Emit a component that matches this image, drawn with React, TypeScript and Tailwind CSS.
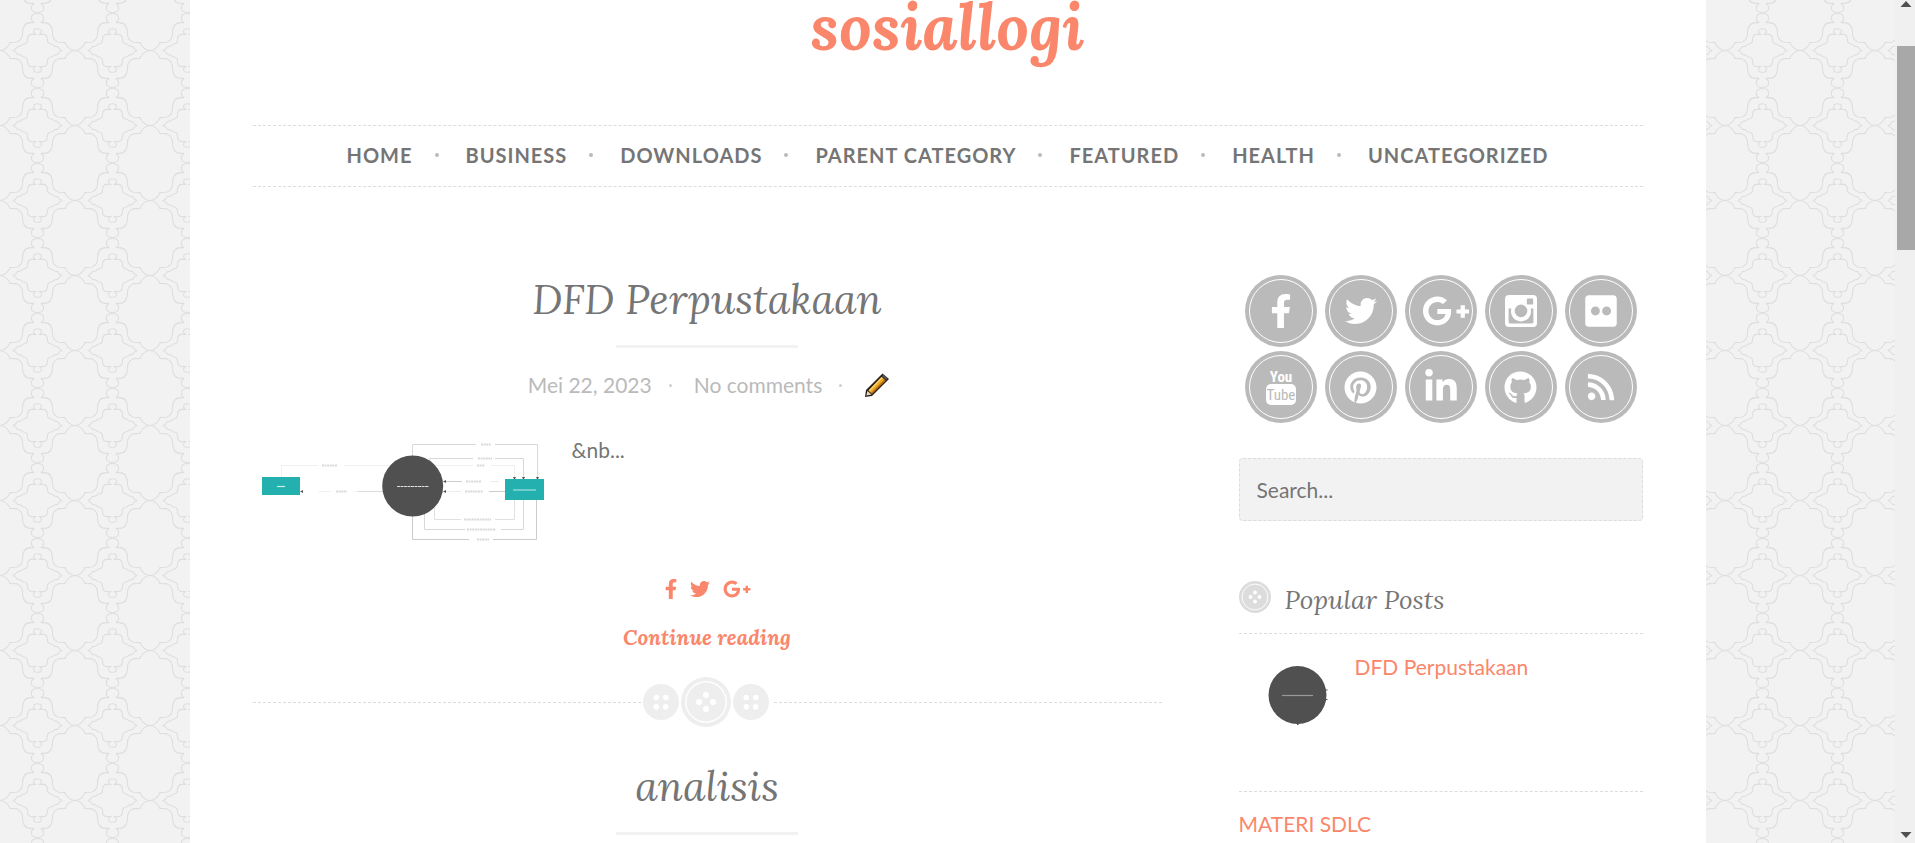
import type { ReactNode } from "react";
import {
  FaFacebookF,
  FaFlickr,
  FaGithub,
  FaGooglePlusG,
  FaLinkedinIn,
  FaPinterest,
  FaRss,
  FaTwitter,
} from "react-icons/fa";

const NAV = ["Home", "Business", "Downloads", "Parent Category", "Featured", "Health", "Uncategorized"];

function Wallpaper() {
  return (
    <svg className="absolute inset-0 h-full w-full" aria-hidden="true">
      <defs>
        <g id="quarter" fill="none" stroke="#dedede" strokeWidth="1.1">
          <path d="M0 37.5C4 37.3 8 33.5 9.8 30.5V29.6C14 29.6 16.5 29.5 18 28.6C21 27 22.5 24 22.5 20.5C22.5 14 24.5 9.6 31 9.6H34.2C32 8.5 31.2 6.5 31.4 4.5C31.8 1.5 34 .5 37.5 .5" />
          <path d="M12.8 37.5C15 37 16.5 35.5 17.5 33.6C20.5 33.6 22 32.5 23 31.2C26 31 27.6 29.5 27.6 26.5C27.6 23.5 28.5 21.4 32 21.4H35.4C34 20.5 33.4 19.5 33.5 18.3C33.7 16.3 35 15.7 37.5 15.7" />
        </g>
        <pattern id="lattice" width="75" height="75" y="13" patternUnits="userSpaceOnUse">
          <use href="#quarter" />
          <use href="#quarter" transform="translate(75 0) scale(-1 1)" />
          <use href="#quarter" transform="translate(0 75) scale(1 -1)" />
          <use href="#quarter" transform="translate(75 75) scale(-1 -1)" />
        </pattern>
      </defs>
      <rect width="100%" height="100%" fill="url(#lattice)" />
    </svg>
  );
}

function InstagramIcon() {
  return (
    <svg width="32" height="32" viewBox="0 0 32 32" aria-hidden="true">
      <path
        fill="currentColor"
        fillRule="evenodd"
        d="M4 0H28a4 4 0 0 1 4 4V28a4 4 0 0 1-4 4H4a4 4 0 0 1-4-4V4a4 4 0 0 1 4-4ZM23 3.6a1.2 1.2 0 0 0-1.2 1.2V8.4a1.2 1.2 0 0 0 1.2 1.2H27a1.2 1.2 0 0 0 1.2-1.2V4.8A1.2 1.2 0 0 0 27 3.6ZM3.6 13.6V27a1.4 1.4 0 0 0 1.4 1.4H27a1.4 1.4 0 0 0 1.4-1.4V13.6H25.6A10 10 0 1 1 6.4 13.6ZM16 9.6a6.3 6.3 0 1 0 0 12.6a6.3 6.3 0 1 0 0-12.6Z"
      />
    </svg>
  );
}

function YoutubeIcon() {
  return (
    <svg
      width="32"
      height="38"
      viewBox="0 0 32 38"
      aria-hidden="true"
      className="font-['Roboto_Condensed','Open_Sans_Condensed','Liberation_Sans_Narrow','Liberation_Sans',sans-serif]"
    >
      <text x="16" y="14" textAnchor="middle" fontSize="15" fontWeight="700" fill="currentColor">
        You
      </text>
      <rect x="1" y="16" width="30" height="21" rx="5" fill="currentColor" />
      <text x="16" y="32" textAnchor="middle" fontSize="15" fill="#bababa">
        Tube
      </text>
    </svg>
  );
}

const SOCIAL: { label: string; icon: ReactNode }[] = [
  { label: "Facebook", icon: <FaFacebookF size={34} /> },
  { label: "Twitter", icon: <FaTwitter size={32} /> },
  { label: "Google Plus", icon: <FaGooglePlusG size={48} className="ml-[10px] shrink-0" /> },
  { label: "Instagram", icon: <InstagramIcon /> },
  { label: "Flickr", icon: <FaFlickr size={36} /> },
  { label: "YouTube", icon: <YoutubeIcon /> },
  { label: "Pinterest", icon: <FaPinterest size={33} /> },
  { label: "LinkedIn", icon: <FaLinkedinIn size={36} /> },
  { label: "GitHub", icon: <FaGithub size={33} /> },
  { label: "RSS", icon: <FaRss size={30} /> },
];

function BigButton({ size, color }: { size: number; color: string }) {
  return (
    <svg width={size} height={size} viewBox="0 0 50 50" aria-hidden="true" className="shrink-0">
      <circle cx="25" cy="25" r="25" fill={color} />
      <circle cx="25" cy="25" r="20.2" fill="none" stroke="#fff" strokeWidth="1.4" />
      <g fill="#fff">
        <circle cx="25" cy="18" r="3" />
        <circle cx="25" cy="32" r="3" />
        <circle cx="18" cy="25" r="3" />
        <circle cx="32" cy="25" r="3" />
      </g>
    </svg>
  );
}

function SmallButton() {
  return (
    <svg width="36" height="36" viewBox="0 0 36 36" aria-hidden="true">
      <circle cx="18" cy="18" r="18" fill="#eee" />
      <g fill="#fff">
        <circle cx="13.3" cy="13.5" r="2.8" />
        <circle cx="22.7" cy="13.5" r="2.8" />
        <circle cx="13.3" cy="22.7" r="2.8" />
        <circle cx="22.7" cy="22.7" r="2.8" />
      </g>
    </svg>
  );
}

function Pencil() {
  return (
    <svg width="26" height="26" viewBox="0 0 26 26" aria-hidden="true">
      <path d="M1 25L2 18L18.5 1.5L25 7L8 24Z" fill="#2b2118" />
      <path d="M4.5 18.5L17.5 5L21.5 8.5L8 21.8Z" fill="#f0a61e" />
      <path d="M4.5 18.5L17.5 5L18.8 6.1L5.8 19.6Z" fill="#f8cf6c" />
      <path d="M7 21L20.4 7.5L21.5 8.5L8 21.8Z" fill="#b56f12" />
      <path d="M2.4 23.5L3.4 19L7.5 22.6Z" fill="#ead9c4" />
      <path d="M18 4.3L19.5 2.8L23.6 6.6L22 8Z" fill="#555" />
    </svg>
  );
}

function Diagram() {
  return (
    <svg width="300" height="120" viewBox="0 0 300 120" role="img" aria-label="DFD Perpustakaan">
      <g fill="none" stroke="#d8d8d8" strokeWidth="1">
        <path d="M159.500 30V14.500H284.500V50" />
        <path d="M176.500 32V28.500H270.500V50" />
        <path d="M28.500 47V35.500H137" stroke="#f0f0f0" />
        <path d="M180 35.500H261.500V50" stroke="#efefef" />
        <path d="M65 61.500H105" stroke="#f2f2f2" />
        <path d="M105 61.500H130" stroke="#dcdcdc" />
        <path d="M193 51.500H213M230 61.500H252" stroke="#ccc" />
        <path d="M213 51.500H246M193 61.500H230" stroke="#ececec" />
        <path d="M159.500 85V109.500H283.500V68" stroke="#ccc" />
        <path d="M171.500 84V99.500H270.500V68" />
        <path d="M181.500 78V89.500H261.500V68" stroke="#e0e0e0" />
      </g>
      <g fill="#fff">
        <rect x="223" y="11" width="19" height="7" />
        <rect x="220" y="25" width="22" height="7" />
        <rect x="65" y="32" width="26" height="7" />
        <rect x="220" y="32" width="18" height="7" />
        <rect x="78" y="58" width="24" height="7" />
        <rect x="209" y="48" width="28" height="7" />
        <rect x="208" y="58" width="28" height="7" />
        <rect x="208" y="86" width="34" height="7" />
        <rect x="212" y="96" width="36" height="7" />
        <rect x="216" y="106" width="24" height="7" />
      </g>
      <g stroke="#dadada" strokeWidth="2" strokeDasharray="2 .6">
        <path d="M228 14.500H238M225 28.500H239M69 35.500H84M224 35.500H232M83 61.500H94M213 51.500H228M212 61.500H230M211 89.500H238M214 99.500H243M224 109.500H236" />
      </g>
      <g fill="#555">
        <path d="M283 47h3l-1.500 3zM269 47h3l-1.500 3zM260 47h3l-1.500 3zM50 60v3l-3-1.500zM193 50v3l-3-1.500zM193 60v3l-3-1.500z" />
      </g>
      <circle cx="159.700" cy="56" r="30.500" fill="#505050" />
      <path d="M144 56.500H176" stroke="#ddd" strokeWidth="1.200" strokeDasharray="3 .5" />
      <rect x="9" y="47" width="38" height="18" fill="#24b0ae" />
      <path d="M24 56.500H32" stroke="#c6efee" strokeWidth="1.200" />
      <rect x="252" y="49" width="39" height="21" fill="#24b0ae" />
      <path d="M260 60H283" stroke="#a6e2e1" strokeWidth="1.200" />
    </svg>
  );
}

function Thumb() {
  return (
    <svg width="90" height="90" viewBox="0 0 90 90" role="img" aria-label="DFD Perpustakaan">
      <circle cx="44.500" cy="35" r="29" fill="#505050" />
      <path d="M29 35.500H60" stroke="#999" strokeWidth="1.200" />
      <path d="M44 63h1.500v2h-1.500zM73 29.500h1.500v1H73zM73 39h1.500v1H73z" fill="#505050" />
    </svg>
  );
}

function PostTitle({ children }: { children: ReactNode }) {
  return (
    <>
      <h2 className="font-['Lora','Liberation_Serif',serif] text-[41px] leading-[60px] italic">
        <a href="#post">{children}</a>
      </h2>
      <div className="mt-4 h-[3px] w-1/5 bg-[#f2f2f2]" />
    </>
  );
}

function NavDot() {
  return <span className="mr-[27px] ml-[22px] size-1 rounded-full bg-[#bababa]" />;
}

function MetaDot() {
  return <span className="mr-[22px] ml-[17px] size-[3px] rounded-full bg-[#cfcfcf]" />;
}

export default function App() {
  return (
    <div className="flex h-screen overflow-hidden bg-[#f2f2f2] font-['Lato',sans-serif] text-[21px] leading-[30px] text-[#757575]">
      <div className="relative flex-1 overflow-hidden">
        <Wallpaper />
        <div className="relative mx-auto min-h-full w-4/5 bg-white px-[63px]">
          <header className="flex h-[125px] items-start justify-center">
            <h1 className="font-['Lora','Liberation_Serif',serif] text-[64px] leading-[54px] font-bold text-[#fa876b] italic">
              <a href="#home">sosiallogi</a>
            </h1>
          </header>

          <nav className="border-y border-dashed border-[#dcdcdc]">
            <ul className="flex h-[60px] items-center justify-center pb-[2px] text-[20px] font-bold tracking-wider uppercase">
              {NAV.map((item, i) => (
                <li key={item} className="flex items-center">
                  {i > 0 && <NavDot />}
                  <a href="#category">{item}</a>
                </li>
              ))}
            </ul>
          </nav>

          <div className="flex gap-[77px] pt-[82px]">
            <main className="min-w-0 flex-1">
              <article className="flex flex-col items-center">
                <PostTitle>DFD Perpustakaan</PostTitle>
                <div className="mt-[22px] flex h-[30px] items-center pl-1 text-[#bababa]">
                  <a href="#date">Mei 22, 2023</a>
                  <MetaDot />
                  <a href="#comments">No comments</a>
                  <MetaDot />
                  <a href="#edit" aria-label="Edit post">
                    <Pencil />
                  </a>
                </div>
                <div className="mt-[30px] flex w-full gap-[19px]">
                  <Diagram />
                  <p className="pt-[5px]">&amp;nb...</p>
                </div>
                <div className="mt-6 flex h-[30px] items-center gap-[9px] pr-[2px] text-[#fa876b]">
                  <a href="#facebook" aria-label="Share on Facebook">
                    <FaFacebookF size={20} />
                  </a>
                  <a href="#twitter" aria-label="Share on Twitter">
                    <FaTwitter size={20} />
                  </a>
                  <a href="#google" aria-label="Share on Google Plus" className="ml-1">
                    <FaGooglePlusG size={28} />
                  </a>
                </div>
                <a
                  href="#post"
                  className="mt-[19px] font-['Lora','Liberation_Serif',serif] text-[21px] leading-[30px] font-bold text-[#fa876b] italic"
                >
                  Continue reading
                </a>
                <div className="mt-6 flex w-full items-center">
                  <span className="flex-1 border-t border-dashed border-[#dcdcdc]" />
                  <span className="flex items-center gap-[2px] pr-[5px] pl-[2px]">
                    <SmallButton />
                    <BigButton size={50} color="#eee" />
                    <SmallButton />
                  </span>
                  <span className="flex-1 border-t border-dashed border-[#dcdcdc]" />
                </div>
              </article>
              <article className="mt-[29px] flex flex-col items-center">
                <PostTitle>analisis</PostTitle>
              </article>
            </main>

            <aside className="w-[404px] shrink-0">
              <ul className="mt-[6px] flex flex-wrap justify-center gap-x-2 gap-y-1">
                {SOCIAL.map(({ label, icon }) => (
                  <li key={label}>
                    <a
                      href="#social"
                      aria-label={label}
                      className="flex size-[72px] rounded-full bg-[#bababa] p-1 text-white"
                    >
                      <span className="flex flex-1 items-center justify-center rounded-full border border-white">
                        {icon}
                      </span>
                    </a>
                  </li>
                ))}
              </ul>

              <form>
                <input
                  type="search"
                  aria-label="Search"
                  placeholder="Search..."
                  className="mt-[35px] h-[63px] w-full rounded-[4px] border border-dashed border-[#dcdcdc] bg-[#f2f2f2] px-[17px] placeholder:text-[#757575]"
                />
              </form>

              <h3 className="mt-[54px] flex h-[59px] gap-[14px] border-b border-dashed border-[#dcdcdc] font-['Lora','Liberation_Serif',serif] text-[26px] leading-[50px] italic">
                <span className="mt-[6px]">
                  <BigButton size={32} color="#dcdcdc" />
                </span>
                Popular Posts
              </h3>
              <ul className="text-[#fa876b]">
                <li className="flex h-[158px] gap-3 border-b border-dashed border-[#dcdcdc] pt-[18px]">
                  <span className="mt-2 ml-[14px]">
                    <Thumb />
                  </span>
                  <a href="#post">DFD Perpustakaan</a>
                </li>
                <li className="pt-[17px]">
                  <a href="#post">MATERI SDLC</a>
                </li>
              </ul>
            </aside>
          </div>
        </div>
      </div>

      <div className="flex w-5 flex-col items-end bg-[#f0f0f0]" aria-hidden="true">
        <svg width="18" height="46" viewBox="0 0 18 46">
          <path d="M3.500 7L9 1L14.500 7Z" fill="#505050" />
        </svg>
        <div className="h-[204px] w-[18px] bg-[#a8a8a8]" />
        <svg className="mt-auto" width="18" height="16" viewBox="0 0 18 16">
          <path d="M3.500 5L9 11L14.500 5Z" fill="#505050" />
        </svg>
      </div>
    </div>
  );
}
